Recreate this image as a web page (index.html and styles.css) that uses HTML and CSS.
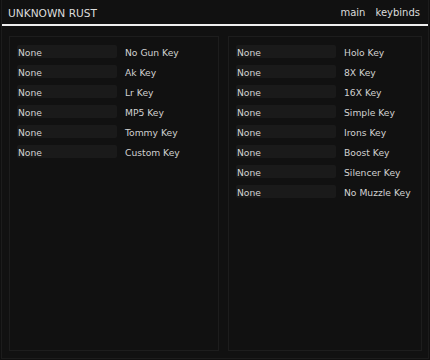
FILE: index.html
```html
<!DOCTYPE html>
<html lang="en">
  <head>
    <meta charset="UTF-8" />
    <title>UNKNOWN RUST</title>
    <link rel="stylesheet" href="styles.css">
  </head>
  <body>
    <div class="window">
      <div class="header">
        <div class="title">UNKNOWN RUST</div>
        <div class="tabs">
          <span class="tab">main</span>
          <span class="tab">keybinds</span>
        </div>
      </div>

      <div class="panels">
        <div class="panel left">
          <div class="row"><div class="key">None</div><span class="label">No Gun Key</span></div>
          <div class="row"><div class="key">None</div><span class="label">Ak Key</span></div>
          <div class="row"><div class="key">None</div><span class="label">Lr Key</span></div>
          <div class="row"><div class="key">None</div><span class="label">MP5 Key</span></div>
          <div class="row"><div class="key">None</div><span class="label">Tommy Key</span></div>
          <div class="row"><div class="key">None</div><span class="label">Custom Key</span></div>
        </div>

        <div class="panel right">
          <div class="row"><div class="key">None</div><span class="label">Holo Key</span></div>
          <div class="row"><div class="key">None</div><span class="label">8X Key</span></div>
          <div class="row"><div class="key">None</div><span class="label">16X Key</span></div>
          <div class="row"><div class="key">None</div><span class="label">Simple Key</span></div>
          <div class="row"><div class="key">None</div><span class="label">Irons Key</span></div>
          <div class="row"><div class="key">None</div><span class="label">Boost Key</span></div>
          <div class="row"><div class="key">None</div><span class="label">Silencer Key</span></div>
          <div class="row"><div class="key">None</div><span class="label">No Muzzle Key</span></div>
        </div>
      </div>
    </div>
  </body>
</html>
```

FILE: styles.css
```css
body {
  font-family: "DejaVu Sans", sans-serif;
  background: #0f0f0f;
  color: #d2d2d2;
  margin: 0;
  padding: 0;
  width: 430px;
  height: 360px;
  overflow: hidden;
}

.window {
  box-sizing: border-box;
  height: 359px;
  margin: 0 1px;
  background: #111111;
  border: 1px solid #1c1c1c;
  border-top: none;
}

.header {
  display: flex;
  justify-content: space-between;
  align-items: flex-end;
  height: 24px;
  padding: 0 8px 0 6px;
  border-bottom: 2px solid #eeeeee;
}

.title {
  font-size: 10.6px;
  line-height: 14px;
  padding-bottom: 4px;
  color: #dcdcdc;
}

.tabs {
  display: flex;
  gap: 10px;
  font-size: 10px;
  line-height: 14px;
  padding-bottom: 4px;
  color: #dcdcdc;
}

.panels {
  display: grid;
  grid-template-columns: 210px 194px;
  gap: 9px;
  padding: 10px 6px 0 7px;
}

.panel {
  box-sizing: border-box;
  height: 315px;
  border: 1px solid #1d1d1d;
  padding: 8px 7px;
  display: flex;
  flex-direction: column;
  gap: 7px;
}

.row {
  display: flex;
  align-items: flex-start;
  gap: 8px;
  height: 13px;
}

.key {
  width: 100px;
  height: 13px;
  box-sizing: border-box;
  padding: 3px 0 0 1px;
  background: #1a1a1a;
  border-radius: 2px;
  font-size: 9.2px;
  line-height: 10px;
}

.label {
  padding-top: 3px;
  font-size: 9.2px;
  line-height: 10px;
}
```
